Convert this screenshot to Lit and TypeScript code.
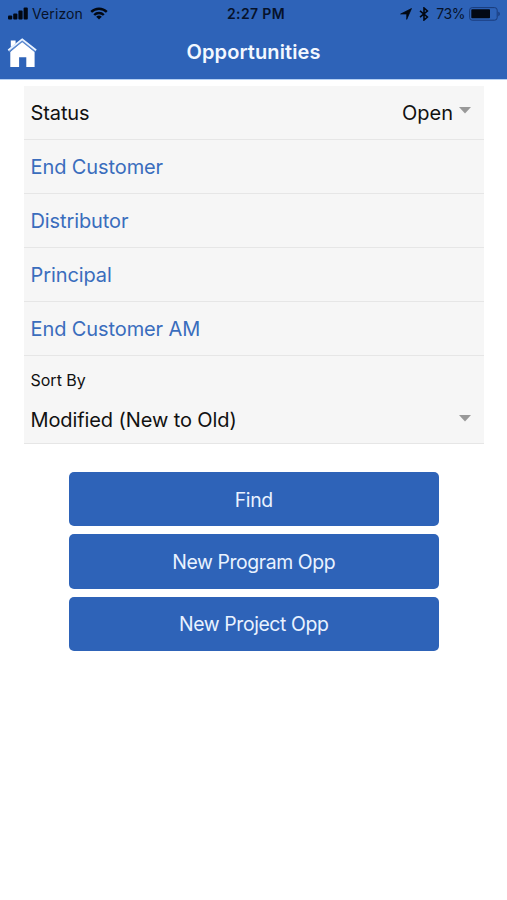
import { LitElement, html, css } from "lit";
import { customElement } from "lit/decorators.js";

@customElement("status-bar")
class StatusBar extends LitElement {
  static styles = css`
    :host { display: grid; grid-template-columns: 1fr auto 1fr; align-items: center; height: 27px; padding: 0 6px 0 8px; box-sizing: border-box; color: #06122a; font-size: 14px; line-height: 27px; }
    .side { display: flex; align-items: center; }
    .right { justify-content: flex-end; }
    .carrier { margin: 0 7px 0 4px; letter-spacing: 0.1px; }
    .time { font-size: 14px; font-weight: 600; letter-spacing: 0.35px; padding: 1px 0 0 3px; line-height: 26px; }
    .bt { margin: 0 7px; }
    .percent { margin-right: 4px; font-size: 14px; letter-spacing: -0.45px; }
    svg { display: block; }
  `;
  render() {
    return html`
      <div class="side">
        <svg width="20" height="13" viewBox="0 0 20 13" fill="#020813">
          <rect x="0" y="8.5" width="4.2" height="4" rx="1" /><rect x="5.2" y="6.5" width="4.2" height="6" rx="1" />
          <rect x="10.4" y="3.5" width="4.2" height="9" rx="1" /><rect x="15.6" y="0.5" width="4.2" height="12" rx="1" />
        </svg>
        <span class="carrier">Verizon</span>
        <svg width="18" height="13" viewBox="0 0 18 13" fill="none" stroke="#020813" stroke-width="2.4">
          <path d="M1.2 4.9a11.2 11.2 0 0 1 15.6 0" /><path d="M4.2 8a6.9 6.9 0 0 1 9.6 0" />
          <path d="M9 12.6 6.2 9.8a4.1 4.1 0 0 1 5.6 0z" fill="#020813" stroke="none" />
        </svg>
      </div>
      <span class="time">2:27 PM</span>
      <div class="side right">
        <svg width="12" height="12" viewBox="0 0 12 12" fill="#020813" stroke="#020813" stroke-width=".7" stroke-linejoin="round"><path d="M11.5.5 6.7 11.4V6H.6z" /></svg>
        <svg class="bt" width="10" height="14" viewBox="0 0 10 14" fill="none" stroke="#020813" stroke-width="1.6">
          <path d="M1 3.8 8.4 10 5 13V1l3.4 3L1 10.2" />
        </svg>
        <span class="percent">73%</span>
        <svg width="32" height="14" viewBox="0 0 32 14">
          <rect x=".6" y=".6" width="27.6" height="12.6" rx="2.6" fill="none" stroke="#193b7a" stroke-width="1" />
          <rect x="2.3" y="2.2" width="18.7" height="9" rx=".8" fill="#020813" />
          <path d="M29.3 4.8c2 .6 2 3.8 0 4.4z" fill="#193b7a" />
        </svg>
      </div>`;
  }
}

@customElement("app-root")
class AppRoot extends LitElement {
  static styles = css`
    :host { display: block; height: 900px; background: #fff; font-family: Inter, "Liberation Sans", sans-serif; color: #111; }
    header { height: 80px; background: #2e63b8; border-bottom: 1px solid #b5d0f3; box-sizing: border-box; }
    .nav { display: grid; grid-template-columns: 30px 1fr 30px; align-items: center; height: 51px; padding: 0 7px; }
    .home { display: block; }
    h1 { margin: 0; padding-bottom: 2px; color: #f3f8ff; text-align: center; font-size: 20px; line-height: 26px; font-weight: 600; letter-spacing: 0.1px; }
    .filters { margin: 6px 23px 0 24px; background: #f6f6f6; font-size: 20px; line-height: 26px; letter-spacing: -0.1px; }
    .row { display: flex; align-items: center; justify-content: space-between; box-sizing: border-box; height: 54.1px; padding: 0 13px 0 6.5px; border-bottom: 1px solid #e6e6e6; }
    .link { color: #3a6dbd; }
    .value { display: flex; align-items: center; gap: 6px; letter-spacing: 0; }
    .sort { height: 87.5px; box-sizing: border-box; border-bottom: 1px solid #e6e6e6; padding: 11px 13px 0 6.5px; }
    .label { font-size: 16px; line-height: 26px; letter-spacing: 0; }
    .pick { display: flex; align-items: center; justify-content: space-between; margin-top: 14px; }
    .arrow { display: block; margin-bottom: 4px; }
    .actions { display: flex; flex-direction: column; gap: 8px; margin: 28px 68.5px 0 69px; }
    button { height: 54.4px; padding: 1px 0 0; border: 0; border-radius: 5px; background: #2e63b8; color: #e9f2ff; font: 19.4px/26px Inter, sans-serif; letter-spacing: -0.4px; }
  `;
  private arrow() {
    return html`<svg class="arrow" width="12" height="7" viewBox="0 0 12 7"><path d="M0 0h12L6 6.5z" fill="#999" /></svg>`;
  }
  render() {
    return html`
      <header>
        <status-bar></status-bar>
        <div class="nav">
          <svg class="home" width="30" height="30" viewBox="0 0 30 30">
            <path d="M3.8 2.5h4.8V7L3.8 11z" fill="#fff" />
            <path d="M15.2 3.6 27.6 14v15H19.3V19.2h-7.2V29H3.3V14z" fill="#fff" />
            <path d="M1.5 13 15.2 2.4l13.7 10.6" fill="none" stroke="#5c8ad0" stroke-width="3" />
            <path d="M1.3 12.2 15.2 1.4l13.9 10.8" fill="none" stroke="#eaf3ff" stroke-width="1.8" />
          </svg>
          <h1>Opportunities</h1>
        </div>
      </header>
      <section class="filters">
        <div class="row"><span>Status</span><span class="value">Open ${this.arrow()}</span></div>
        ${["End Customer", "Distributor", "Principal", "End Customer AM"].map((t) => html`<div class="row link"><span>${t}</span></div>`)}
        <div class="sort">
          <div class="label">Sort By</div>
          <div class="pick"><span>Modified (New to Old)</span>${this.arrow()}</div>
        </div>
      </section>
      <div class="actions">
        ${["Find", "New Program Opp", "New Project Opp"].map((t) => html`<button>${t}</button>`)}
      </div>`;
  }
}
